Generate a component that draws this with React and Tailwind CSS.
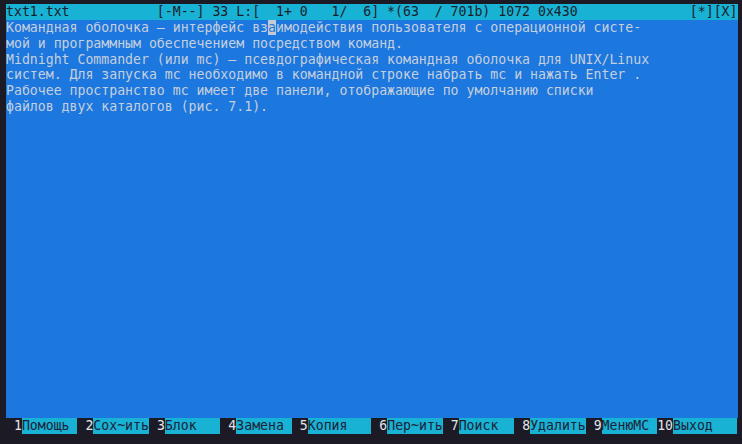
import React from 'react';

const lines = [
  'Командная оболочка — интерфейс взаимодействия пользователя с операционной систе-',
  'мой и программным обеспечением посредством команд.',
  'Midnight Commander (или mc) — псевдографическая командная оболочка для UNIX/Linux',
  'систем. Для запуска mc необходимо в командной строке набрать mc и нажать Enter .',
  'Рабочее пространство mc имеет две панели, отображающие по умолчанию списки',
  'файлов двух каталогов (рис. 7.1).',
];

// [number, label, width in columns]
const keys = [
  ['1', 'Помощь', 9],
  ['2', 'Сох~ить', 9],
  ['3', 'Блок', 9],
  ['4', 'Замена', 9],
  ['5', 'Копия', 10],
  ['6', 'Пер~ить', 9],
  ['7', 'Поиск', 9],
  ['8', 'Удалить', 9],
  ['9', 'МенюМС', 9],
  ['10', 'Выход', 10],
];

const TextLine = ({ text, cursor }) => {
  if (cursor == null) return <div className="h-[15.85px]">{text || ' '}</div>;
  return (
    <div className="h-[15.85px]">
      {text.slice(0, cursor)}
      <span className="bg-[#c3cbd8] text-[#1c77de]">{text[cursor]}</span>
      {text.slice(cursor + 1)}
    </div>
  );
};

export default function App() {
  return (
    <div className="w-[742px] h-[444px] bg-[#1c1a24] pt-[4px] pl-[6px] overflow-hidden font-['DejaVu_Sans_Mono','Liberation_Mono',monospace] text-[13.2px] leading-[15.85px] whitespace-pre">
      <div className="w-[731.5px] h-[430px] flex flex-col">
        <div className="h-[15.85px] flex justify-between bg-[#18b2d4] text-[#1b1d2a]">
          <span>{'txt1.txt           [-M--] 33 L:[  1+ 0   1/  6] *(63  / 701b) 1072 0x430'}</span>
          <span>[*][X]</span>
        </div>
        <div className="flex-1 bg-[#1c77de] text-[#c6cfdd]">
          {lines.map((l, i) => (
            <TextLine key={i} text={l} cursor={i === 0 ? 33 : null} />
          ))}
        </div>
        <div className="h-[15.85px] flex">
          {keys.map(([n, label, w]) => (
            <div key={n} className="flex">
              <span className="text-[#e4e4ea]">{n.padStart(2, ' ')}</span>
              <span className="bg-[#18b2d4] text-[#1f2238]">{label.padEnd(w - 2, ' ')}</span>
            </div>
          ))}
        </div>
      </div>
    </div>
  );
}
